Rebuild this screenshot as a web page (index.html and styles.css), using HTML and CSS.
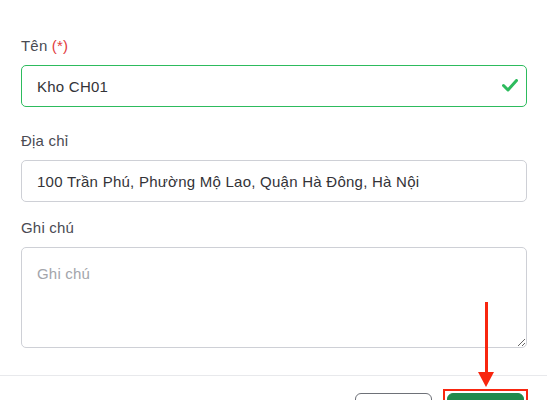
FILE: index.html
```html
<!DOCTYPE html>
<html lang="vi">
<head>
<meta charset="utf-8">
<link rel="stylesheet" href="styles.css">
</head>
<body>
<div class="modal">
  <div class="modal-body">
    <div class="field field-name">
      <label class="label">Tên <span class="req">(*)</span></label>
      <div class="input-wrap">
        <input class="input valid" type="text" value="Kho CH01">
        <svg class="check" width="16" height="13" viewBox="0 0 16 13"><path d="M1.5 6.5 L6 11 L14.5 1.5" fill="none" stroke="#2dbb5d" stroke-width="3" stroke-linecap="round" stroke-linejoin="round"/></svg>
      </div>
    </div>
    <div class="field field-addr">
      <label class="label">Địa chỉ</label>
      <input class="input" type="text" value="100 Trần Phú, Phường Mộ Lao, Quận Hà Đông, Hà Nội">
    </div>
    <div class="field field-note">
      <label class="label">Ghi chú</label>
      <textarea class="textarea" placeholder="Ghi chú"></textarea>
    </div>
  </div>
  <div class="modal-footer">
    <button class="btn btn-outline">Hủy</button>
    <div class="highlight">
      <button class="btn btn-success">Lưu</button>
      <div class="arrow">
        <div class="arrow-shaft"></div>
        <div class="arrow-head"></div>
      </div>
    </div>
  </div>
</div>
</body>
</html>
```

FILE: styles.css
```css
html, body {
  margin: 0;
  padding: 0;
  background: #ffffff;
  font-family: "Liberation Sans", Arial, sans-serif;
  overflow: hidden;
}

.modal {
  width: 547px;
  height: 400px;
  overflow: hidden;
}

.modal-body {
  padding: 36px 20px 0 21px;
  height: 339px;
}

.field {
  display: flex;
  flex-direction: column;
}

.field-addr {
  margin-top: 24px;
}

.field-note {
  margin-top: 16px;
}

.label {
  display: block;
  font-size: 15px;
  line-height: 20px;
  letter-spacing: 0.2px;
  color: #4a4b53;
  margin-bottom: 9px;
}

.req {
  color: #e23c3c;
}

.input-wrap {
  position: relative;
}

.input {
  box-sizing: border-box;
  width: 506px;
  height: 42px;
  margin: 0;
  padding: 1px 40px 0 15px;
  border: 1px solid #ced0d6;
  border-radius: 5px;
  font-family: "Liberation Sans", Arial, sans-serif;
  font-size: 15px;
  letter-spacing: 0.25px;
  color: #333338;
  background: #fff;
  outline: none;
}

.input.valid {
  border-color: #2dbb5d;
}

.check {
  position: absolute;
  right: 9px;
  top: 14px;
}

.textarea {
  box-sizing: border-box;
  width: 506px;
  height: 101px;
  margin: 0;
  padding: 16px 15px 12px 15px;
  border: 1px solid #ced0d6;
  border-radius: 5px;
  font-family: "Liberation Sans", Arial, sans-serif;
  font-size: 15px;
  line-height: 20px;
  letter-spacing: 0.2px;
  color: #333338;
  outline: none;
  display: block;
}

.textarea::placeholder {
  color: #a3a5ab;
}

.modal-footer {
  border-top: 1px solid #e8e9ec;
  display: flex;
  justify-content: flex-end;
  align-items: flex-start;
  gap: 11px;
  padding: 13px 19px 0 0;
}

.btn {
  box-sizing: border-box;
  height: 38px;
  border-radius: 6px;
  font-family: "Liberation Sans", Arial, sans-serif;
  font-size: 15px;
  line-height: 18px;
  margin: 0;
  padding: 12px 0 0 0;
  display: flex;
  align-items: flex-start;
  justify-content: center;
}

.btn-outline {
  width: 77px;
  margin-top: 4px;
  background: #fff;
  border: 1px solid #6e7178;
  color: #4a4b53;
}

.highlight {
  position: relative;
  border: 2px solid #f8260f;
  padding: 2px 2px 0 2px;
  display: flex;
}

.btn-success {
  width: 77px;
  background: #228a4d;
  border: 1px solid #228a4d;
  color: #fff;
}

.arrow {
  position: absolute;
  left: 33px;
  top: -89px;
  width: 16px;
  display: flex;
  flex-direction: column;
  align-items: center;
}

.arrow-shaft {
  width: 3px;
  height: 70px;
  background: #f8260f;
}

.arrow-head {
  width: 0;
  height: 0;
  border-left: 8px solid transparent;
  border-right: 8px solid transparent;
  border-top: 15px solid #f8260f;
}
```
